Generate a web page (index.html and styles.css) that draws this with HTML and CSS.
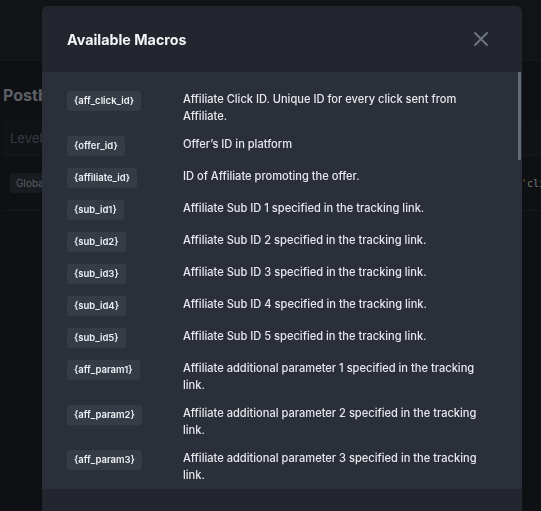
FILE: index.html
```
<!DOCTYPE html>
<html lang="en">
<head>
    <meta charset="UTF-8">
    <meta name="viewport" content="width=device-width, initial-scale=1.0">
    <title>Postback Settings</title>
    <link rel="stylesheet" href="styles.css">
</head>
<body>
    <div class="topbar"></div>
    <div class="page">
        <h2 class="page-title">Postback</h2>
        <div class="filter-row">
            <div class="filter-input">Level</div>
        </div>
        <div class="table-row">
            <span class="level-badge">Global</span>
            <span class="url-code"><span class="quote">'</span>cli</span>
        </div>
    </div>

    <div class="backdrop"></div>
    <div class="modal">
        <div class="modal-header">
            <h3>Available Macros</h3>
            <button class="close-button" aria-label="Close">
                <svg width="14" height="14" viewBox="0 0 14 14">
                    <path d="M1 1 L13 13 M13 1 L1 13" stroke="currentColor" stroke-width="1.8" stroke-linecap="round"/>
                </svg>
            </button>
        </div>
        <div class="modal-body">
            <div class="macro-list" id="macroList"></div>
            <div class="scroll-thumb"></div>
        </div>
        <div class="modal-footer"></div>
    </div>

    <script>
        const macros = [
            ['{aff_click_id}', 'Affiliate Click ID. Unique ID for every click sent from Affiliate.'],
            ['{offer_id}', 'Offer’s ID in platform'],
            ['{affiliate_id}', 'ID of Affiliate promoting the offer.'],
            ['{sub_id1}', 'Affiliate Sub ID 1 specified in the tracking link.'],
            ['{sub_id2}', 'Affiliate Sub ID 2 specified in the tracking link.'],
            ['{sub_id3}', 'Affiliate Sub ID 3 specified in the tracking link.'],
            ['{sub_id4}', 'Affiliate Sub ID 4 specified in the tracking link.'],
            ['{sub_id5}', 'Affiliate Sub ID 5 specified in the tracking link.'],
            ['{aff_param1}', 'Affiliate additional parameter 1 specified in the tracking link.'],
            ['{aff_param2}', 'Affiliate additional parameter 2 specified in the tracking link.'],
            ['{aff_param3}', 'Affiliate additional parameter 3 specified in the tracking link.']
        ];

        const macroList = document.getElementById('macroList');
        macros.forEach(([code, text]) => {
            const row = document.createElement('div');
            row.className = 'macro-row';
            row.innerHTML = `<div class="macro-cell"><span class="macro-tag">${code}</span></div><div class="macro-text">${text}</div>`;
            macroList.appendChild(row);
        });
    </script>
</body>
</html>
```

FILE: styles.css
```
body {
    font-family: Inter, "Noto Sans", sans-serif;
    margin: 0;
    background-color: #1e2029;
    color: #e4e6ea;
    height: 100vh;
    overflow: hidden;
}
.topbar {
    height: 60px;
    background-color: #25272f;
    border-bottom: 1px solid #2d3038;
}
.page {
    padding: 0 0 0 3px;
}
.page-title {
    font-size: 16px;
    font-weight: 700;
    color: #b9bfca;
    margin: 24px 0 0 0;
    line-height: 20px;
}
.filter-row {
    margin-top: 16px;
    border-bottom: 1px solid #2d3038;
    background-color: #23252d;
    height: 34px;
    display: flex;
    align-items: center;
}
.filter-input {
    color: #6b7180;
    font-size: 13px;
    padding-left: 7px;
}
.table-row {
    display: flex;
    align-items: center;
    justify-content: space-between;
    height: 54px;
    padding: 0 0 0 7px;
    border-bottom: 1px solid #30333b;
}
.level-badge {
    background-color: #30363f;
    color: #b7bcc6;
    font-size: 10px;
    padding: 4px 6px;
    border-radius: 3px;
}
.url-code {
    font-family: "DejaVu Sans Mono", monospace;
    font-size: 10px;
    color: #e2e2e2;
    width: 20px;
    white-space: nowrap;
}
.url-code .quote {
    color: #e0a060;
}
.backdrop {
    position: fixed;
    inset: 0;
    background-color: rgba(0, 0, 0, 0.5);
}
.modal {
    position: fixed;
    left: 42px;
    top: 6px;
    width: 480px;
    height: 540px;
    border-radius: 6px 6px 0 0;
    overflow: hidden;
    display: flex;
    flex-direction: column;
    background-color: #23262e;
}
.modal-header {
    display: flex;
    align-items: center;
    justify-content: space-between;
    height: 66px;
    padding: 0 34px 0 25px;
    flex-shrink: 0;
}
.modal-header h3 {
    margin: 0;
    font-size: 14.3px;
    font-weight: 700;
    color: #f3f4f6;
}
.close-button {
    background: none;
    border: none;
    padding: 0;
    color: #6f7682;
    cursor: pointer;
    display: flex;
}
.modal-body {
    position: relative;
    height: 417px;
    flex-shrink: 0;
    overflow: hidden;
    background-color: #2b2f39;
}
/* scrollbar thumb, list is scrolled to the top */
.scroll-thumb {
    position: absolute;
    top: 0;
    right: 1px;
    width: 3px;
    height: 88px;
    border-radius: 1px;
    background-color: #626a77;
}
.macro-list {
    padding: 19px 32px 0 25px;
}
.macro-row {
    display: flex;
    align-items: flex-start;
    margin-bottom: 12px;
}
.macro-cell {
    width: 116px;
    flex-shrink: 0;
    display: flex;
}
.macro-tag {
    background-color: #363c46;
    color: #eceef1;
    font-size: 9.5px;
    font-weight: 600;
    line-height: 20px;
    padding: 0 7px;
    border-radius: 3px;
}
.macro-text {
    font-size: 11.1px;
    font-weight: 500;
    line-height: 16.5px;
    color: #e6e8ec;
    flex: 1;
}
.modal-footer {
    flex: 1;
    background-color: #23262e;
}
```
